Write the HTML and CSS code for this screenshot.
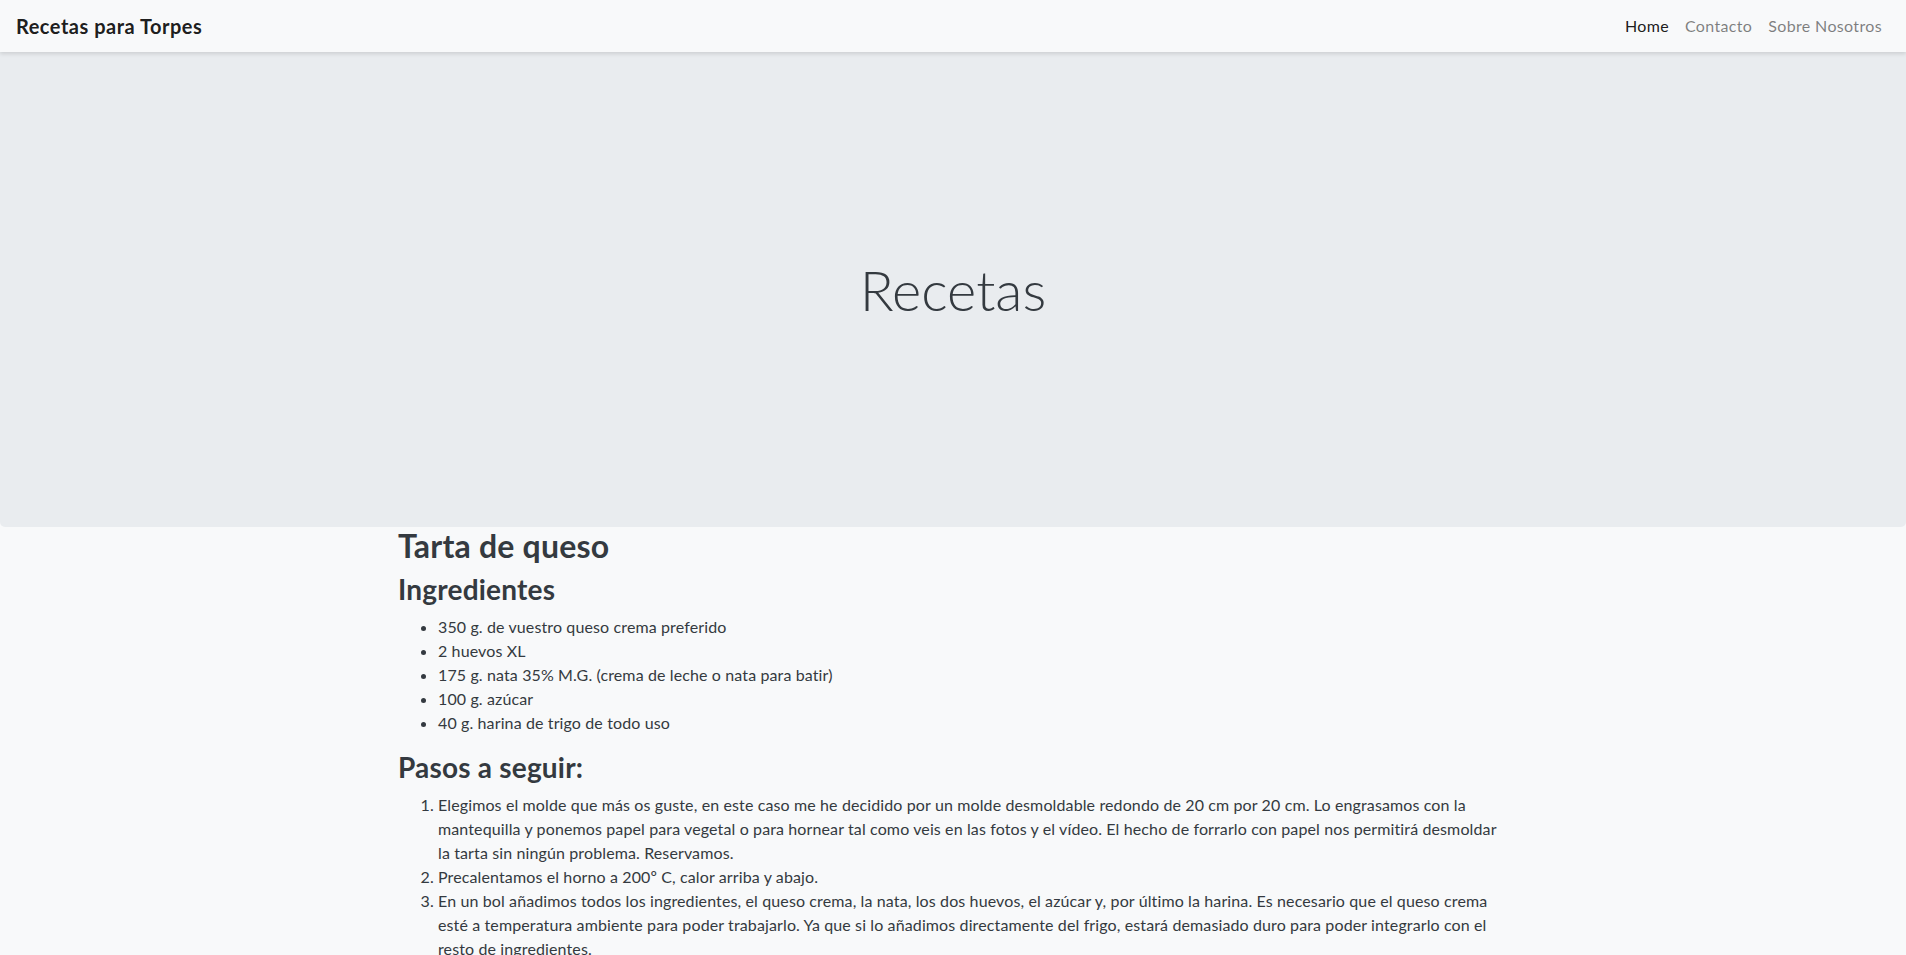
FILE: index.html
```html
<!DOCTYPE html>
<html lang="es">
<head>
<meta charset="utf-8">
<title>Recetas para Torpes</title>
<link rel="stylesheet" href="styles.css">
</head>
<body>
<nav class="navbar">
  <a class="brand" href="#">Recetas para Torpes</a>
  <ul class="nav">
    <li><a class="nav-link active" href="#">Home</a></li>
    <li><a class="nav-link" href="#">Contacto</a></li>
    <li><a class="nav-link" href="#">Sobre Nosotros</a></li>
  </ul>
</nav>
<header class="jumbotron">
  <h1 class="display">Recetas</h1>
</header>
<main class="container">
  <h2 class="title">Tarta de queso</h2>
  <h3 class="subtitle">Ingredientes</h3>
  <ul class="list">
    <li>350 g. de vuestro queso crema preferido</li>
    <li>2 huevos XL</li>
    <li>175 g. nata 35% M.G. (crema de leche o nata para batir)</li>
    <li>100 g. azúcar</li>
    <li>40 g. harina de trigo de todo uso</li>
  </ul>
  <h3 class="subtitle">Pasos a seguir:</h3>
  <ol class="list">
    <li>Elegimos el molde que más os guste, en este caso me he decidido por un molde desmoldable redondo de 20 cm por 20 cm. Lo engrasamos con la mantequilla y ponemos papel para vegetal o para hornear tal como veis en las fotos y el vídeo. El hecho de forrarlo con papel nos permitirá desmoldar la tarta sin ningún problema. Reservamos.</li>
    <li>Precalentamos el horno a 200º C, calor arriba y abajo.</li>
    <li>En un bol añadimos todos los ingredientes, el queso crema, la nata, los dos huevos, el azúcar y, por último la harina. Es necesario que el queso crema esté a temperatura ambiente para poder trabajarlo. Ya que si lo añadimos directamente del frigo, estará demasiado duro para poder integrarlo con el resto de ingredientes.</li>
    <li>Batimos con unas varillas o con la batidora hasta obtener una mezcla homogénea y sin grumos.</li>
    <li>Vertemos la mezcla en el molde y horneamos durante unos 45 minutos, hasta que la superficie esté bien dorada.</li>
    <li>Dejamos enfriar a temperatura ambiente y después la guardamos en la nevera al menos 4 horas antes de desmoldar y servir.</li>
  </ol>
</main>
</body>
</html>
```

FILE: styles.css
```css
html {
  overflow-y: scroll;
}
html::-webkit-scrollbar {
  width: 4px;
  background: #f1f1f1;
}
html::-webkit-scrollbar-thumb {
  background: #c1c1c1;
}
html::-webkit-scrollbar-button:vertical:start:decrement {
  display: block;
  height: 13px;
  background: #f1f1f1;
}
* {
  box-sizing: border-box;
}
body {
  margin: 0;
  background: #f8f9fa;
  color: #343a40;
  font-family: Lato, "Open Sans", "Liberation Sans", sans-serif;
  font-size: 16px;
  line-height: 1.5;
}
a {
  text-decoration: none;
}
.navbar {
  position: relative;
  z-index: 2;
  height: 52px;
  padding: 0 16px;
  display: flex;
  align-items: center;
  justify-content: space-between;
  background: #f8f9fa;
  box-shadow: 0 2px 4px rgba(0, 0, 0, 0.12);
}
.brand {
  font-size: 20px;
  font-weight: 700;
  color: rgba(0, 0, 0, 0.9);
  line-height: 30px;
  letter-spacing: 0.5px;
}
.nav {
  list-style: none;
  margin: 0;
  padding: 0;
  display: flex;
}
.nav-link {
  display: block;
  padding: 0 8px;
  color: rgba(0, 0, 0, 0.5);
  letter-spacing: 0.35px;
}
.nav-link.active {
  color: rgba(0, 0, 0, 0.9);
}
.jumbotron {
  height: 475px;
  background: #e9ecef;
  border-radius: 0 0 5px 5px;
  display: flex;
  align-items: center;
  justify-content: center;
}
.display {
  margin: 0;
  font-size: 56px;
  font-weight: 300;
  line-height: 1.2;
  color: #343a40;
}
.container {
  max-width: 1140px;
  margin: 0 auto;
  padding: 0 15px;
}
.title {
  margin: 0 0 8px;
  font-size: 32px;
  font-weight: 700;
  line-height: 1.2;
  letter-spacing: 0.2px;
}
.subtitle {
  margin: 0 0 8px;
  font-size: 28px;
  font-weight: 700;
  line-height: 1.2;
  letter-spacing: 0.2px;
}
.list {
  margin: 0 0 16px;
  padding-left: 40px;
  letter-spacing: 0.12px;
}
```
